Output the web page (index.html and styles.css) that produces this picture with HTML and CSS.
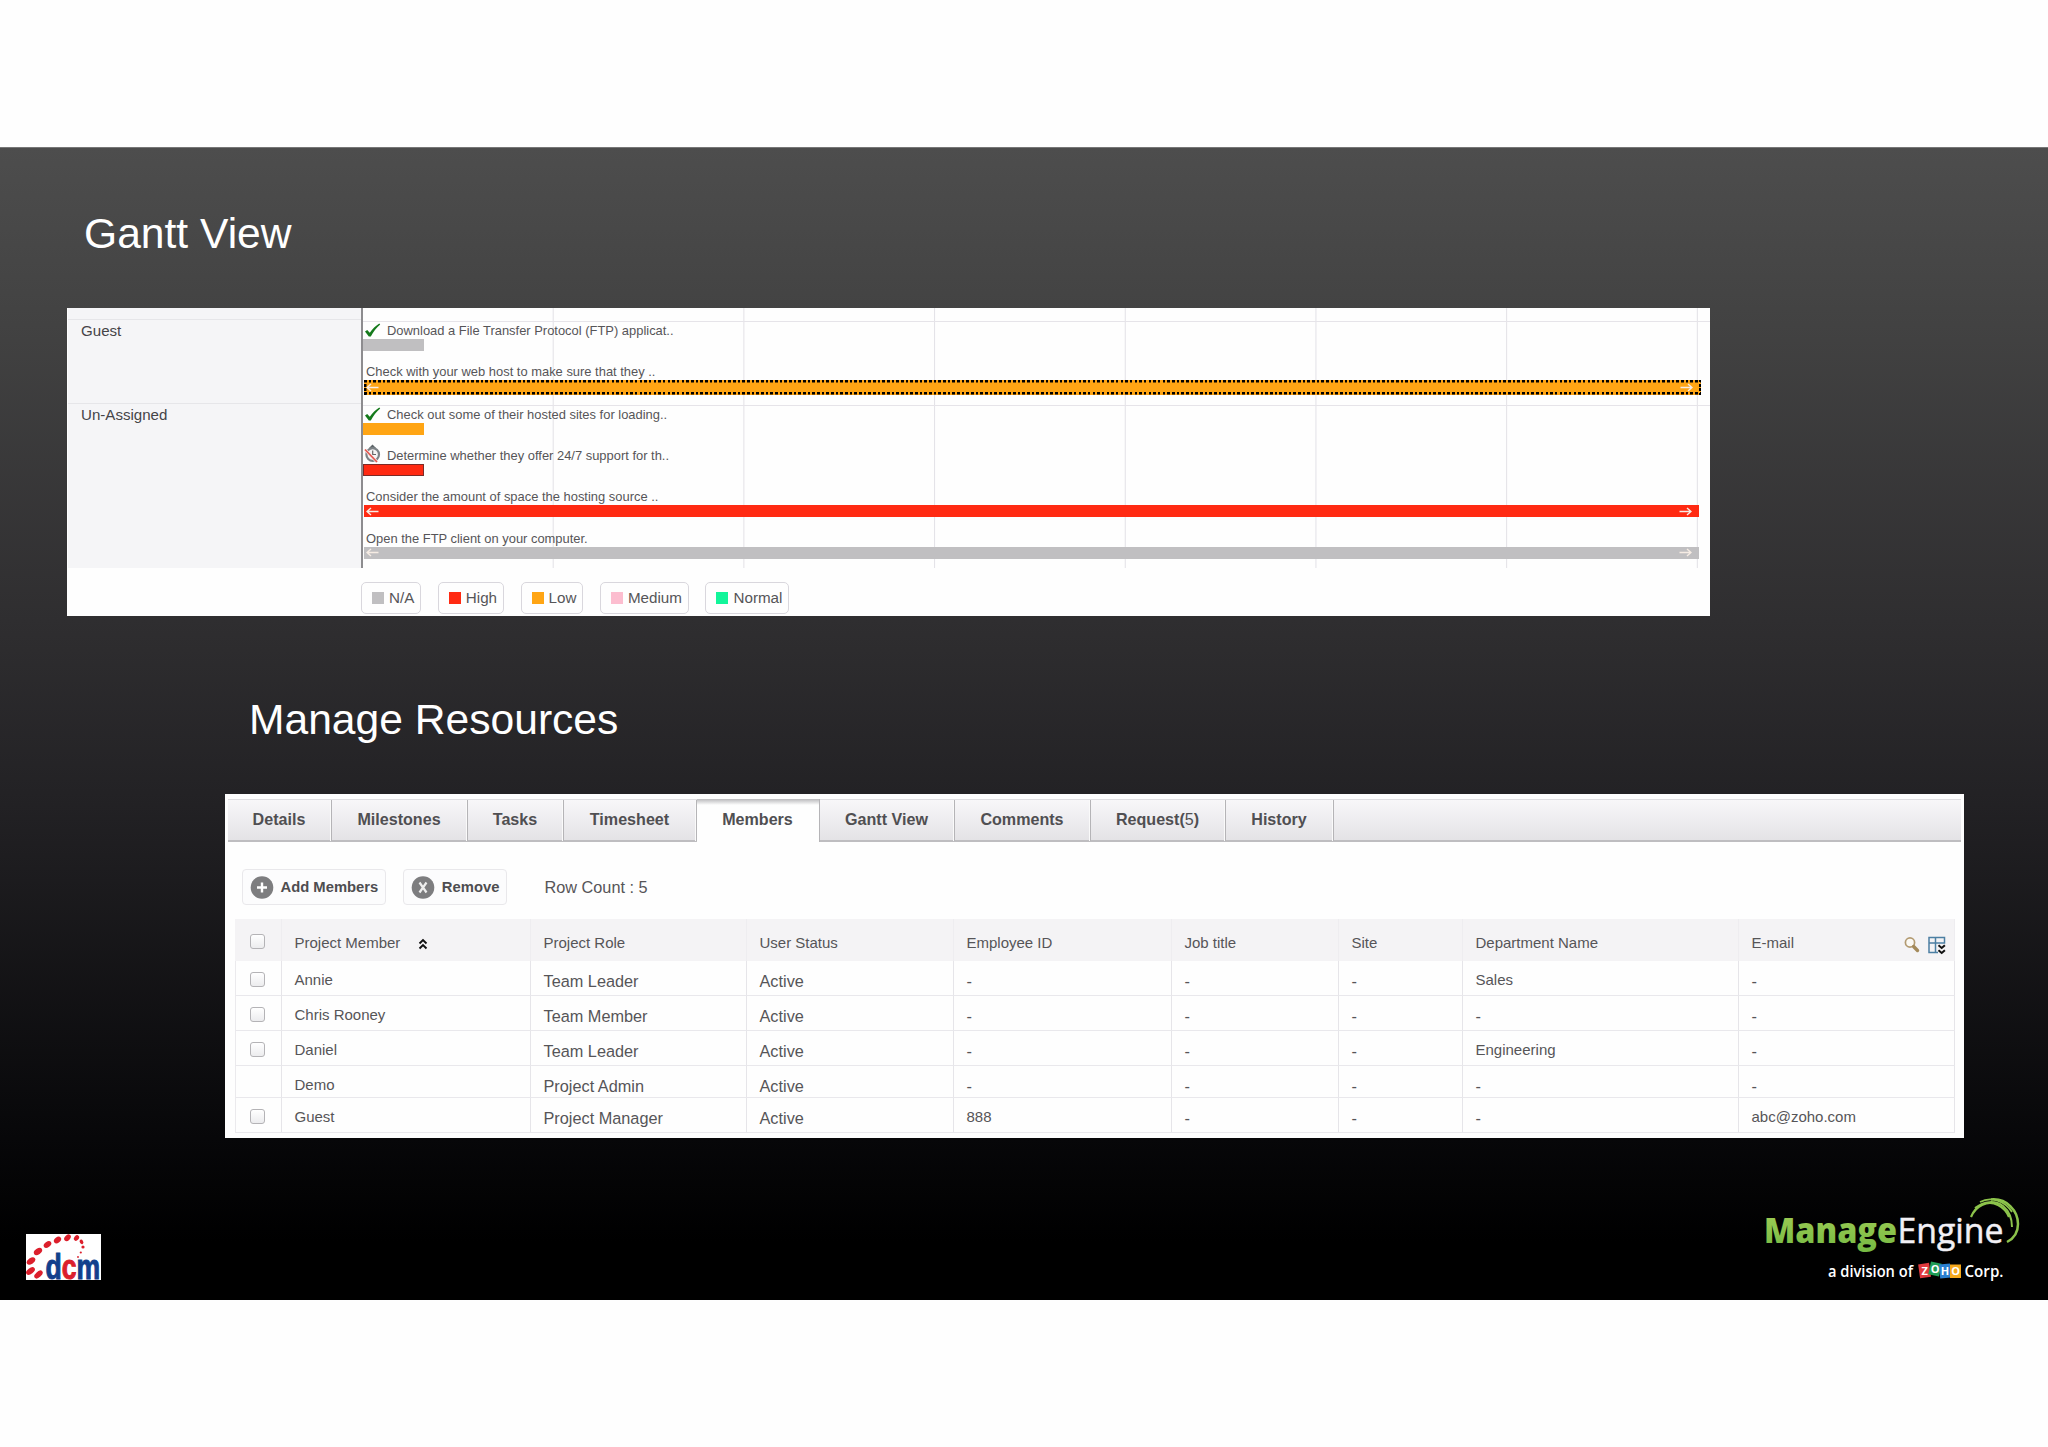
FILE: index.html
```html
<!DOCTYPE html>
<html lang="en">
  <head>
    <meta charset="utf-8">
    <title>Gantt View and Manage Resources</title>

    <link rel="stylesheet" href="styles.css">
  </head>
  <body>
    <div class="slide">
      <h2>Gantt View</h2>

      <!-- Gantt chart -->
      <div class="gantt">
        <div class="gantt-body">
          <div class="owners">
            <div class="owner">Guest</div>
            <div class="owner">Un-Assigned</div>
          </div>

          <div class="chart">
            <div class="group">
              <div class="task">
                <div class="name">
                  <svg class="tick" width="17" height="15" viewBox="0 0 17 15"><path d="M1 8.500 L3.200 7 L5.800 9.800 C8.500 6 11.500 3 15.300 0.600 L16.200 1.600 C12.500 5 9.500 8.500 6.800 13.600 L4.800 13.600 Z" fill="#157a1c"/></svg>
                  Download a File Transfer Protocol (FTP) applicat..
                </div>
                <div class="bar na"></div>
              </div>
              <div class="task">
                <div class="name">Check with your web host to make sure that they ..</div>
                <div class="bar long low dotted">
                  <svg class="arrow" width="13" height="9" viewBox="0 0 13 9"><path d="M12.500 4.500 H1 M5 1 L1 4.500 L5 8"/></svg>
                  <svg class="arrow" width="13" height="9" viewBox="0 0 13 9"><path d="M0.500 4.500 H12 M8 1 L12 4.500 L8 8"/></svg>
                </div>
              </div>
            </div>

            <div class="group">
              <div class="task">
                <div class="name">
                  <svg class="tick" width="17" height="15" viewBox="0 0 17 15"><path d="M1 8.500 L3.200 7 L5.800 9.800 C8.500 6 11.500 3 15.300 0.600 L16.200 1.600 C12.500 5 9.500 8.500 6.800 13.600 L4.800 13.600 Z" fill="#157a1c"/></svg>
                  Check out some of their hosted sites for loading..
                </div>
                <div class="bar low"></div>
              </div>
              <div class="task">
                <div class="name">
                  <svg class="clock" width="17" height="19" viewBox="0 0 17 19">
                    <path d="M5.500 3.500 L8.500 0.500 L11.500 3.500 V5 H5.500 Z" fill="#5d6468"/>
                    <circle cx="8.700" cy="10.500" r="6.300" fill="#f4f4f4" stroke="#7d8387" stroke-width="2.200"/>
                    <path d="M8.700 6.500 V10.500 H12" fill="none" stroke="#666" stroke-width="1.200"/>
                    <path d="M1 5.500 L13 18" stroke="#f7e9e8" stroke-width="3"/>
                    <path d="M1 5.500 L13 18" stroke="#e2574f" stroke-width="1.700"/>
                  </svg>
                  Determine whether they offer 24/7 support for th..
                </div>
                <div class="bar high outlined"></div>
              </div>
              <div class="task">
                <div class="name">Consider the amount of space the hosting source ..</div>
                <div class="bar long high">
                  <svg class="arrow" width="13" height="9" viewBox="0 0 13 9"><path d="M12.500 4.500 H1 M5 1 L1 4.500 L5 8"/></svg>
                  <svg class="arrow" width="13" height="9" viewBox="0 0 13 9"><path d="M0.500 4.500 H12 M8 1 L12 4.500 L8 8"/></svg>
                </div>
              </div>
              <div class="task">
                <div class="name">Open the FTP client on your computer.</div>
                <div class="bar long na">
                  <svg class="arrow" width="13" height="9" viewBox="0 0 13 9"><path d="M12.500 4.500 H1 M5 1 L1 4.500 L5 8"/></svg>
                  <svg class="arrow" width="13" height="9" viewBox="0 0 13 9"><path d="M0.500 4.500 H12 M8 1 L12 4.500 L8 8"/></svg>
                </div>
              </div>
            </div>
          </div>
        </div>

        <div class="legend">
          <div class="key"><span class="swatch na"></span>N/A</div>
          <div class="key"><span class="swatch high"></span>High</div>
          <div class="key"><span class="swatch low"></span>Low</div>
          <div class="key"><span class="swatch medium"></span>Medium</div>
          <div class="key"><span class="swatch normal"></span>Normal</div>
        </div>
      </div>

      <h2 class="second">Manage Resources</h2>

      <!-- Members -->
      <div class="resources">
        <div class="tabs">
          <div class="tab" style="width: 104px">Details</div>
          <div class="tab" style="width: 136px">Milestones</div>
          <div class="tab" style="width: 96px">Tasks</div>
          <div class="tab" style="width: 133px">Timesheet</div>
          <div class="tab active" style="width: 123px">Members</div>
          <div class="tab" style="width: 135px">Gantt View</div>
          <div class="tab" style="width: 136px">Comments</div>
          <div class="tab" style="width: 135px">Request(<span class="count">5</span>)</div>
          <div class="tab" style="width: 108px">History</div>
        </div>

        <div class="toolbar">
          <div class="button">
            <svg width="24" height="25" viewBox="0 0 24 25"><circle cx="12" cy="12.500" r="11.300" fill="#7d7d7f"/><path d="M12 7.500 V17.500 M7 12.500 H17" stroke="#fff" stroke-width="2.400"/></svg>
            Add Members
          </div>
          <div class="button">
            <svg width="24" height="25" viewBox="0 0 24 25"><circle cx="12" cy="12.500" r="11.300" fill="#7d7d7f"/><path d="M8.500 7.500 L15.500 17.500 M15.500 7.500 L8.500 17.500" stroke="#eee" stroke-width="2.200"/></svg>
            Remove
          </div>
          <div class="row-count">Row Count : 5</div>
        </div>

        <table>
          <colgroup>
            <col style="width: 47px">
            <col style="width: 249px">
            <col style="width: 216px">
            <col style="width: 207px">
            <col style="width: 218px">
            <col style="width: 167px">
            <col style="width: 124px">
            <col style="width: 276px">
            <col style="width: 216px">
          </colgroup>
          <thead>
            <tr>
              <th class="check"><input type="checkbox"></th>
              <th>
                Project Member
                <svg class="sort" width="10" height="12" viewBox="0 0 10 12"><path d="M1.500 5.500 L5 2 L8.500 5.500 M1.500 10.500 L5 7 L8.500 10.500" fill="none" stroke="#111" stroke-width="1.900"/></svg>
              </th>
              <th>Project Role</th>
              <th>User Status</th>
              <th>Employee ID</th>
              <th>Job title</th>
              <th>Site</th>
              <th>Department Name</th>
              <th>
                <div class="last-head">
                  E-mail
                  <span class="tools">
                    <svg width="16" height="18" viewBox="0 0 16 18">
                      <circle cx="6" cy="6.500" r="4.600" fill="#fbf9f4" stroke="#b39b72" stroke-width="1.700"/>
                      <path d="M9.600 10.500 L13.500 14.500" stroke="#a48a5b" stroke-width="3.400" stroke-linecap="round"/>
                    </svg>
                    <svg width="18" height="19" viewBox="0 0 18 19">
                      <path d="M1 1.500 H16.500 V7 H1 Z M1 7 V16.500 H10 M7.500 1.500 V16.500" fill="none" stroke="#4c7fa3" stroke-width="1.500"/>
                      <path d="M10.500 9.200 L13.700 12 L16.900 9.200 M10.500 14.200 L13.700 17 L16.900 14.200" fill="none" stroke="#111" stroke-width="2"/>
                    </svg>
                  </span>
                </div>
              </th>
            </tr>
          </thead>
          <tbody>
            <tr>
              <td class="check"><input type="checkbox"></td>
              <td>Annie</td>
              <td class="big">Team Leader</td>
              <td class="big">Active</td>
              <td class="big">-</td>
              <td class="big">-</td>
              <td class="big">-</td>
              <td>Sales</td>
              <td class="big">-</td>
            </tr>
            <tr>
              <td class="check"><input type="checkbox"></td>
              <td>Chris Rooney</td>
              <td class="big">Team Member</td>
              <td class="big">Active</td>
              <td class="big">-</td>
              <td class="big">-</td>
              <td class="big">-</td>
              <td class="big">-</td>
              <td class="big">-</td>
            </tr>
            <tr>
              <td class="check"><input type="checkbox"></td>
              <td>Daniel</td>
              <td class="big">Team Leader</td>
              <td class="big">Active</td>
              <td class="big">-</td>
              <td class="big">-</td>
              <td class="big">-</td>
              <td>Engineering</td>
              <td class="big">-</td>
            </tr>
            <tr class="short">
              <td class="check"></td>
              <td>Demo</td>
              <td class="big">Project Admin</td>
              <td class="big">Active</td>
              <td class="big">-</td>
              <td class="big">-</td>
              <td class="big">-</td>
              <td class="big">-</td>
              <td class="big">-</td>
            </tr>
            <tr>
              <td class="check"><input type="checkbox"></td>
              <td>Guest</td>
              <td class="big">Project Manager</td>
              <td class="big">Active</td>
              <td>888</td>
              <td class="big">-</td>
              <td class="big">-</td>
              <td class="big">-</td>
              <td>abc@zoho.com</td>
            </tr>
          </tbody>
        </table>
      </div>

      <!-- Logos -->
      <div class="footer">
        <svg class="dcm" width="80" height="60" viewBox="0 0 80 60">
          <rect width="75" height="46" fill="#fff"/>
          <g fill="#dc1f2c">
            <ellipse cx="12.500" cy="40.500" rx="5" ry="2.800" transform="rotate(-42 12.500 40.500)"/>
            <ellipse cx="4.500" cy="37" rx="5" ry="2.900" transform="rotate(-38 4.500 37)"/>
            <ellipse cx="5" cy="27" rx="4.800" ry="2.900" transform="rotate(-35 5 27)"/>
            <ellipse cx="12" cy="17.500" rx="4.600" ry="2.900" transform="rotate(-35 12 17.500)"/>
            <ellipse cx="21.500" cy="10.500" rx="4.200" ry="2.800" transform="rotate(-35 21.500 10.500)"/>
            <ellipse cx="31.500" cy="6" rx="4" ry="2.800" transform="rotate(-38 31.500 6)"/>
            <ellipse cx="41.500" cy="3.800" rx="3.800" ry="2.700" transform="rotate(-45 41.500 3.800)"/>
            <ellipse cx="50.500" cy="4" rx="3.100" ry="2.200" transform="rotate(-50 50.500 4)"/>
            <ellipse cx="55.500" cy="7.800" rx="2.400" ry="1.700" transform="rotate(60 55.500 7.800)"/>
            <circle cx="57" cy="13" r="1.600"/>
            <circle cx="54.800" cy="18.500" r="1.100"/>
            <circle cx="52" cy="23" r="0.900"/>
          </g>
          <!-- letters are squeezed to fit the white box -->
          <text class="dcm-text" transform="translate(19.500 45) scale(0.76 1)">
            <tspan class="blue">d</tspan><tspan class="red">c</tspan><tspan class="blue">m</tspan>
          </text>
        </svg>

        <svg class="manage-engine" width="262" height="90" viewBox="0 0 262 90">
          <defs>
            <linearGradient id="green" x1="0" y1="0" x2="0" y2="1">
              <stop offset="0" stop-color="#a5cf57"/>
              <stop offset="1" stop-color="#74b943"/>
            </linearGradient>
          </defs>
          <text x="2" y="45.500" font-family="Open Sans" font-weight="800" font-size="34.500" textLength="133" lengthAdjust="spacingAndGlyphs" fill="url(#green)">Manage</text>
          <text x="135.500" y="45.500" font-family="Open Sans" font-size="34.500" textLength="106" lengthAdjust="spacingAndGlyphs" fill="#f2f0f5" stroke="#f2f0f5" stroke-width="0.500">Engine</text>
          <g fill="none" stroke="#8cc34b">
            <path d="M209 20 C214 8 226 3 236 8 C241 10.500 245 15 247 20" stroke-width="2.200"/>
            <path d="M213 11 C222 4 233 3 241 9 C247 14 250 22 250 30" stroke-width="2"/>
            <path d="M218 5 C229 -1 243 4 250 15" stroke-width="1.800"/>
            <path d="M229 2.500 C245 1 256 14 256 27 C256 36 251 42 245 45" stroke-width="2.500"/>
          </g>
          <g font-family="Open Sans" font-weight="600" font-size="16.500" fill="#fff">
            <text x="66" y="80" textLength="85" lengthAdjust="spacingAndGlyphs">a division of</text>
            <text x="202.500" y="80" textLength="39" lengthAdjust="spacingAndGlyphs">Corp.</text>
          </g>
          <rect x="157" y="66.500" width="11" height="14" fill="#e03a3e" transform="rotate(-8 163 73)"/>
          <rect x="167.500" y="65.500" width="11" height="13" fill="#1f9d55" transform="rotate(12 173 72)"/>
          <rect x="177.500" y="67" width="11" height="14" fill="#2a7fd0" transform="rotate(-5 183 73)"/>
          <rect x="188" y="67.500" width="11" height="13.500" fill="#f5a81c"/>
          <g font-family="Open Sans" font-weight="bold" font-size="11" fill="#fff">
            <text x="159.500" y="78">Z</text>
            <text x="168.800" y="76">O</text>
            <text x="178.800" y="78">H</text>
            <text x="189.200" y="78">O</text>
          </g>
        </svg>
      </div>
    </div>
  </body>
</html>
```
FILE: styles.css
```css
* {
  box-sizing: border-box;
}

body {
  margin: 0;
  background-color: #fefefe;
  font-family: "Liberation Sans", Arial, sans-serif;
  color: #565558;
}

svg {
  display: block;
  flex: none;
}

.slide {
  margin-top: 147px;
  height: 1153px;
  padding-top: 60px;
  border-top: 1px solid #777;
  background-image: linear-gradient(#4d4d4d 0%, #434343 14%, #2f2e30 41%, #232225 56%, #070709 86%, #000 95%);
}

h2 {
  margin: 0 0 50px 84px;
  font-size: 42.6px;
  font-weight: normal;
  line-height: 50px;
  color: white;
}

h2.second {
  margin: 78px 0 50px 249px;
}

/* gantt chart */
.gantt {
  width: 1643px;
  height: 308px;
  margin-left: 67px;
  background-color: #fefefe;
}

.gantt-body {
  display: flex;
  height: 260px;
}

.owners {
  width: 293px;
  margin-left: 1px;
  padding-top: 11px;
  background-color: #f5f5f7;
}

.owner {
  height: 84px;
  padding-left: 13px;
  border-top: 1px solid #e6e6e9;
  font-size: 15.1px;
  line-height: 21px;
  color: #454447;
}

.chart {
  flex: 1;
  padding-top: 13px;
  border-left: 2px solid #8d8c8f;
  background-image: linear-gradient(to right, transparent 189.7px, #e2e1e6 189.7px);
  background-size: 190.7px 100%;
}

.group {
  height: 84px;
  border-top: 1px solid #e6e4e9;
}

.task {
  height: 41.2px;
}

.name {
  display: flex;
  height: 17px;
  padding-left: 3px;
  font-size: 12.93px;
  line-height: 17px;
  white-space: nowrap;
}

.tick {
  margin: 1px 6px 0 -2px;
}

.clock {
  margin: -3px 6px 0 -2px;
}

.bar {
  width: 61px;
  height: 12px;
}

.bar.long {
  display: flex;
  justify-content: space-between;
  align-items: center;
  width: 1335px;
  margin-left: 1px;
  padding: 0 7px 0 2px;
}

/* square dots on all four sides */
.bar.dotted {
  width: 1337px;
  height: 15px;
  margin-top: -0.7px;
  padding: 0 8px 0 2px;
  background-image:
    repeating-linear-gradient(to right, black 0 2.6px, transparent 2.6px 4.67px),
    repeating-linear-gradient(to right, black 0 2.6px, transparent 2.6px 4.67px),
    repeating-linear-gradient(to bottom, black 0 2.5px, transparent 2.5px 4.2px),
    repeating-linear-gradient(to bottom, black 0 2.5px, transparent 2.5px 4.2px);
  background-position: top, bottom, left, right;
  background-size: 100% 2.5px, 100% 2.5px, 2.5px 100%, 2.5px 100%;
  background-repeat: no-repeat;
}

.bar.outlined {
  border: 1px solid #7d2b27;
}

.arrow path {
  fill: none;
  stroke: #f6ece4;
  stroke-width: 1.4;
}

.na {
  background-color: #c0bfc1;
}

.high {
  background-color: #ff2a12;
}

.low {
  background-color: #ffa514;
}

.medium {
  background-color: #fcbdcf;
}

.normal {
  background-color: #12f59a;
}

.legend {
  display: flex;
  gap: 16.5px;
  padding: 14px 0 0 294px;
}

.key {
  display: flex;
  align-items: center;
  gap: 5px;
  height: 32px;
  padding: 0 6px 0 10px;
  border: 1px solid #d9d7dd;
  border-radius: 5px;
  font-size: 15.2px;
  line-height: 30px;
}

.swatch {
  width: 12px;
  height: 12px;
}

/* members panel */
.resources {
  width: 1739px;
  height: 344px;
  margin-left: 225px;
  padding-top: 5px;
  background-color: #fefefe;
}

.tabs {
  display: flex;
  height: 43px;
  margin: 0 3px;
  border-top: 1px solid #dedde0;
  border-bottom: 2px solid #bebdc0;
  background-image: linear-gradient(#f8f7f9, #e4e3e6);
}

.tab {
  height: 41px;
  padding-right: 1px;
  border-right: 1px solid #b5b4b7;
  box-shadow: inset -1px 0 #fafafa;
  font-size: 16.1px;
  font-weight: bold;
  line-height: 39px;
  text-align: center;
  color: #504f52;
}

.tab.active {
  margin-top: -1px;
  height: 43px;
  line-height: 41px;
  background-color: #fefefe;
  background-image: linear-gradient(#bab9bc, #fefefe 6px);
  box-shadow: none;
}

.count {
  font-weight: normal;
}

.toolbar {
  display: flex;
  align-items: center;
  height: 36px;
  margin: 27px 0 14px 17px;
}

.button {
  display: flex;
  align-items: center;
  gap: 7px;
  height: 36px;
  margin-right: 17px;
  padding: 0 7px 0 6.5px;
  border: 1px solid #e9e8eb;
  border-radius: 4px;
  background-color: #fcfcfd;
  font-size: 14.8px;
  font-weight: bold;
  line-height: 35px;
  color: #4e4d50;
}

.row-count {
  margin-left: 20px;
  font-size: 16.3px;
}

table {
  width: 1720px;
  margin-left: 10px;
  border-collapse: separate;
  border-spacing: 0;
  table-layout: fixed;
  font-size: 15px;
  line-height: 22px;
}

th {
  height: 42px;
  padding: 13px 0 0 12.5px;
  border-right: 1px solid #eeedf0;
  background-color: #f4f3f5;
  font-weight: normal;
  text-align: left;
  vertical-align: top;
}

td {
  height: 35px;
  padding: 8px 0 0 12.5px;
  border-right: 1px solid #e6e5e9;
  border-bottom: 1px solid #e9e8ec;
  vertical-align: top;
}

td:first-child {
  border-left: 1px solid #ebeaed;
}

.short td {
  height: 31px;
}

td.big {
  padding-top: 9px;
  font-size: 16.3px;
}

td.check {
  padding: 11px 0 0 14px;
}

th.check {
  padding: 15px 0 0 15px;
}

input {
  appearance: none;
  display: block;
  width: 15px;
  height: 15px;
  margin: 0;
  border: 1px solid #b4b3b6;
  border-radius: 3px;
  background-image: linear-gradient(#fff, #ececee);
}

.sort {
  display: inline-block;
  margin-left: 13px;
  vertical-align: -2px;
}

.last-head {
  display: flex;
  justify-content: space-between;
}

.tools {
  display: flex;
  gap: 8px;
  padding: 4px 8px 0 0;
}

/* logos */
.footer {
  display: flex;
  justify-content: space-between;
  align-items: flex-start;
  padding: 59px 24px 0 26px;
}

.dcm {
  margin-top: 37px;
}

.dcm-text {
  font-size: 35px;
  font-weight: bold;
}

.blue {
  fill: #123f8c;
  stroke: #123f8c;
}

.red {
  fill: #dc1f2c;
  stroke: #dc1f2c;
}
```
